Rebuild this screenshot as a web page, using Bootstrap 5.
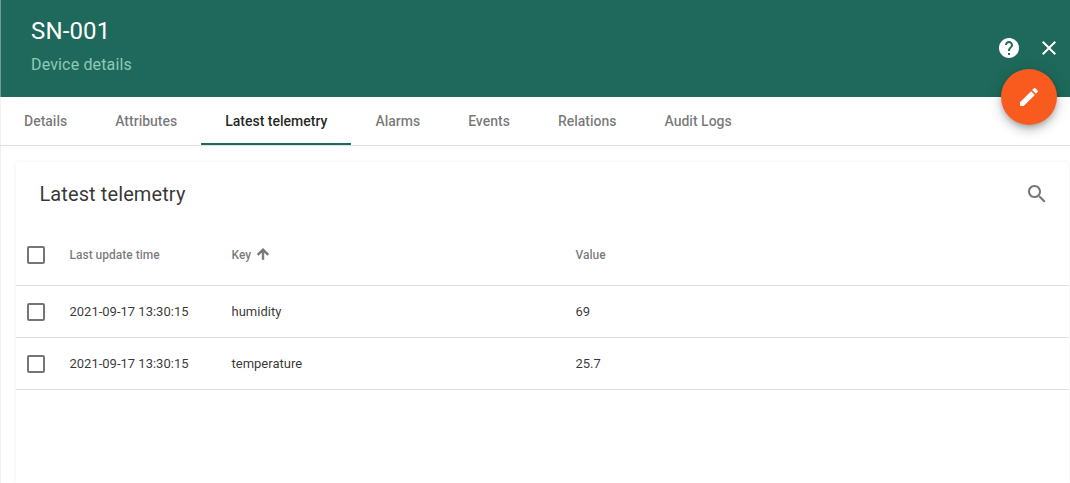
<!DOCTYPE html>
<html lang="en">
<head>
  <meta charset="UTF-8" />
  <meta name="viewport" content="width=device-width, initial-scale=1.0"/>
  <title>SN-001</title>
  <link href="https://cdn.jsdelivr.net/npm/bootstrap@5.3.0/dist/css/bootstrap.min.css" rel="stylesheet">
  <style>
    html, body {
      height: 483px;
      overflow: hidden;
    }
    body {
      font-family: Roboto, "Liberation Sans", sans-serif;
      color: rgba(0, 0, 0, .76);
      background: linear-gradient(#f0f0f0, #f0f0f0) 0 0 / 1px 100% no-repeat #fff;
    }
    .device-head {
      height: 97px;
      background: #1e695b;
      border-left: 1px solid #6f9d93;
      padding: 14px 0 0 30px;
      color: #fff;
    }
    .device-title {
      font-size: 24px;
      line-height: 34px;
      font-weight: 400;
      letter-spacing: .15px;
      margin: 0;
    }
    .device-sub {
      font-size: 16px;
      line-height: 24px;
      letter-spacing: .15px;
      margin: 5px 0 0;
      color: #8fc9b8;
    }
    .head-btn {
      top: 36px;
      width: 24px;
      height: 24px;
      fill: #fff;
    }
    .head-help { right: 49px; }
    .head-close { right: 9px; }
    .edit-fab {
      top: 69px;
      right: 13px;
      width: 56px;
      height: 56px;
      background: #f95b1f;
      box-shadow: 0 3px 5px -1px rgba(0,0,0,.2), 0 6px 10px 0 rgba(0,0,0,.14), 0 1px 18px 0 rgba(0,0,0,.12);
    }
    .edit-fab svg {
      width: 24px;
      height: 24px;
      fill: #fff;
    }
    .tab-strip {
      height: 49px;
      border-bottom: 1px solid #e0e0e0;
    }
    .tab-strip .nav-link {
      height: 48px;
      padding: 0 24px;
      font-size: 14px;
      font-weight: 500;
      line-height: 48px;
      color: rgba(0, 0, 0, .54);
    }
    .tab-strip .nav-link.active {
      color: rgba(0, 0, 0, .87);
      border-bottom: 2px solid #1e695b;
    }
    .telemetry-box {
      margin: 16px 1px 0 16px;
      height: 321px;
      box-shadow: 0 0 4px rgba(0, 0, 0, .07);
    }
    .telemetry-bar {
      height: 64px;
      padding: 0 20px 0 23.5px;
    }
    .telemetry-bar h2 {
      font-size: 20px;
      font-weight: 400;
      letter-spacing: .1px;
      margin: 0;
      color: rgba(0, 0, 0, .8);
    }
    .telemetry-bar svg {
      width: 24px;
      height: 24px;
      fill: #757575;
    }
    .telemetry-table {
      table-layout: fixed;
      margin: 0;
      font-size: 13px;
    }
    .telemetry-table th,
    .telemetry-table td {
      padding: 0;
      vertical-align: middle;
      border-bottom: 1px solid #dedede;
      color: rgba(0, 0, 0, .8);
      background: transparent;
    }
    .telemetry-table th {
      height: 59px;
      font-size: 12px;
      font-weight: 500;
      color: rgba(0, 0, 0, .54);
    }
    .telemetry-table td {
      height: 52px;
      padding-top: 2px;
    }
    .col-pick { width: 53.5px; }
    .col-time { width: 162px; }
    .col-key { width: 344px; }
    .pick-box {
      display: block;
      width: 24px;
      height: 24px;
      margin-left: 8px;
      fill: #757575;
    }
    .sort-arrow {
      width: 16px;
      height: 16px;
      margin-left: 1px;
      vertical-align: -3px;
      fill: #757575;
      stroke: #757575;
      stroke-width: 1.6;
    }
  </style>
</head>
<body class="position-relative">

  <!-- Header -->
  <header class="device-head">
    <h1 class="device-title">SN-001</h1>
    <p class="device-sub">Device details</p>
  </header>
  <svg class="head-btn head-help position-absolute" viewBox="0 0 24 24"><path d="M12 2C6.48 2 2 6.48 2 12s4.48 10 10 10 10-4.48 10-10S17.52 2 12 2zm1 17h-2v-2h2v2zm2.07-7.75l-.9.92C13.45 12.9 13 13.5 13 15h-2v-.5c0-1.1.45-2.1 1.17-2.83l1.24-1.26c.37-.36.59-.86.59-1.41 0-1.1-.9-2-2-2s-2 .9-2 2H8c0-2.21 1.79-4 4-4s4 1.79 4 4c0 .88-.36 1.68-.93 2.25z"/></svg>
  <svg class="head-btn head-close position-absolute" viewBox="0 0 24 24"><path d="M19 6.41L17.59 5 12 10.59 6.41 5 5 6.41 10.59 12 5 17.59 6.41 19 12 13.41 17.59 19 19 17.59 13.41 12z"/></svg>
  <button class="edit-fab btn rounded-circle border-0 p-0 position-absolute d-flex align-items-center justify-content-center" type="button">
    <svg viewBox="0 0 24 24"><path d="M3 17.25V21h3.75L17.81 9.94l-3.75-3.75L3 17.25zM20.71 7.04c.39-.39.39-1.02 0-1.41l-2.34-2.34c-.39-.39-1.02-.39-1.41 0l-1.83 1.83 3.75 3.75 1.83-1.83z"/></svg>
  </button>

  <!-- Tabs -->
  <ul class="nav tab-strip">
    <li class="nav-item"><a class="nav-link" href="#">Details</a></li>
    <li class="nav-item"><a class="nav-link" href="#">Attributes</a></li>
    <li class="nav-item"><a class="nav-link active" href="#">Latest telemetry</a></li>
    <li class="nav-item"><a class="nav-link" href="#">Alarms</a></li>
    <li class="nav-item"><a class="nav-link" href="#">Events</a></li>
    <li class="nav-item"><a class="nav-link" href="#">Relations</a></li>
    <li class="nav-item"><a class="nav-link" href="#">Audit Logs</a></li>
  </ul>

  <!-- Telemetry -->
  <section class="telemetry-box">
    <div class="telemetry-bar d-flex align-items-center justify-content-between">
      <h2>Latest telemetry</h2>
      <svg viewBox="0 0 24 24"><path d="M15.5 14h-.79l-.28-.27C15.41 12.59 16 11.11 16 9.5 16 5.91 13.09 3 9.5 3S3 5.91 3 9.5 5.91 16 9.5 16c1.61 0 3.09-.59 4.23-1.57l.27.28v.79l5 4.99L20.49 19l-4.99-5zm-6 0C7.01 14 5 11.99 5 9.5S7.01 5 9.5 5 14 7.01 14 9.5 11.99 14 9.5 14z"/></svg>
    </div>
    <table class="table telemetry-table">
      <colgroup>
        <col class="col-pick">
        <col class="col-time">
        <col class="col-key">
        <col>
      </colgroup>
      <thead>
        <tr>
          <th><svg class="pick-box" viewBox="0 0 24 24"><path d="M19 5v14H5V5h14m0-2H5c-1.1 0-2 .9-2 2v14c0 1.1.9 2 2 2h14c1.1 0 2-.9 2-2V5c0-1.1-.9-2-2-2z"/></svg></th>
          <th>Last update time</th>
          <th>Key <svg class="sort-arrow" viewBox="0 0 24 24"><path d="M4 12l1.41 1.41L11 7.83V20h2V7.83l5.58 5.59L20 12l-8-8-8 8z"/></svg></th>
          <th>Value</th>
        </tr>
      </thead>
      <tbody>
        <tr>
          <td><svg class="pick-box" viewBox="0 0 24 24"><path d="M19 5v14H5V5h14m0-2H5c-1.1 0-2 .9-2 2v14c0 1.1.9 2 2 2h14c1.1 0 2-.9 2-2V5c0-1.1-.9-2-2-2z"/></svg></td>
          <td>2021-09-17 13:30:15</td>
          <td>humidity</td>
          <td>69</td>
        </tr>
        <tr>
          <td><svg class="pick-box" viewBox="0 0 24 24"><path d="M19 5v14H5V5h14m0-2H5c-1.1 0-2 .9-2 2v14c0 1.1.9 2 2 2h14c1.1 0 2-.9 2-2V5c0-1.1-.9-2-2-2z"/></svg></td>
          <td>2021-09-17 13:30:15</td>
          <td>temperature</td>
          <td>25.7</td>
        </tr>
      </tbody>
    </table>
  </section>

  <script src="https://cdn.jsdelivr.net/npm/bootstrap@5.3.0/dist/js/bootstrap.bundle.min.js"></script>
</body>
</html>
